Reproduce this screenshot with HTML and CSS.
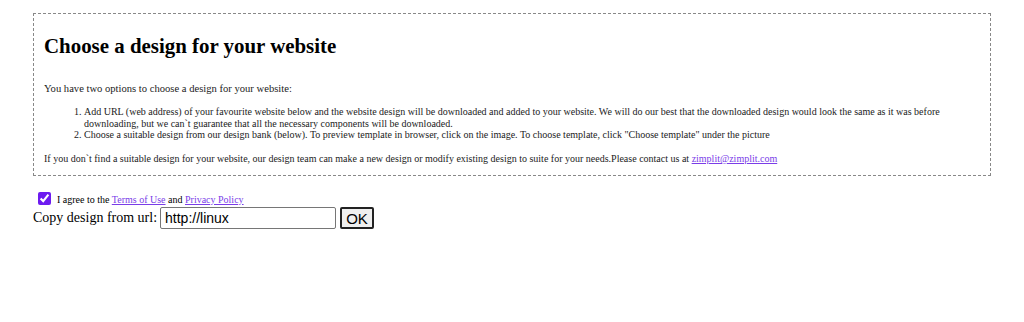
FILE: index.html
```html
<!DOCTYPE html>
<html lang="en">
<head>
    <meta charset="UTF-8">
    <title>Choose a design</title>
    <link rel="stylesheet" href="styles.css">
</head>
<body>
    <div class="design-info">
        <h2>Choose a design for your website</h2>
        <p class="intro">You have two options to choose a design for your website:</p>
        <ol>
            <li>Add URL (web address) of your favourite website below and the website design will be downloaded and added to your website. We will do our best that the downloaded design would look the same as it was before downloading, but we can`t guarantee that all the necessary components will be downloaded.</li>
            <li>Choose a suitable design from our design bank (below). To preview template in browser, click on the image. To choose template, click "Choose template" under the picture</li>
        </ol>
        <p class="contact">If you don`t find a suitable design for your website, our design team can make a new design or modify existing design to suite for your needs.Please contact us at <a href="#">zimplit@zimplit.com</a></p>
    </div>

    <form class="copy-form" onsubmit="return false">
        <div class="agree">
            <input type="checkbox" id="agree" checked>
            <label for="agree">I agree to the <a href="#">Terms of Use</a> and <a href="#">Privacy Policy</a></label>
        </div>
        <div class="url-row">
            <label for="url">Copy design from url:</label>
            <input type="text" id="url" class="url-input" value="http://linux">
            <button class="ok-btn">OK</button>
        </div>
    </form>
</body>
</html>
```

FILE: styles.css
```css
body {
    font-family: 'Liberation Serif', serif;
    margin: 8px;
    color: #000;
    background: #fff;
}

.design-info {
    margin: 5px 25px 0 25px;
    padding: 0 10px;
    border: 1px dashed #888;
    font-size: 10px;
    color: #222;
}

.design-info h2 {
    font-size: 20.9px;
    margin: 20px 0 24px 0;
    color: #000;
}

.design-info p {
    margin: 12px 0;
}

.design-info .intro {
    font-size: 10.6px;
}

.design-info .contact {
    margin-bottom: 11px;
}

.design-info ol {
    margin: 12px 0;
    padding-left: 40px;
    line-height: 11.7px;
}

a {
    color: #7a3de8;
}

.copy-form {
    margin: 16px 25px 0 25px;
}

.agree {
    font-size: 10px;
    display: flex;
    align-items: flex-end;
}

.agree input {
    accent-color: #6d1bf0;
    width: 13px;
    height: 13px;
    margin: 0 6px 0 5px;
}

.url-row {
    font-size: 14px;
    display: flex;
    align-items: center;
    margin-top: 2px;
}

.url-input {
    font-family: 'Liberation Sans', sans-serif;
    font-size: 14px;
    width: 176px;
    height: 22px;
    box-sizing: border-box;
    margin: 0 4px 0 3px;
    padding: 1px 4px;
    border: 1px solid #767676;
    border-radius: 2px;
}

.ok-btn {
    font-family: 'Liberation Sans', sans-serif;
    font-size: 15px;
    height: 22px;
    width: 34px;
    padding: 0;
    background: #efefef;
    border: 2px solid #222;
    border-radius: 2px;
}
```
